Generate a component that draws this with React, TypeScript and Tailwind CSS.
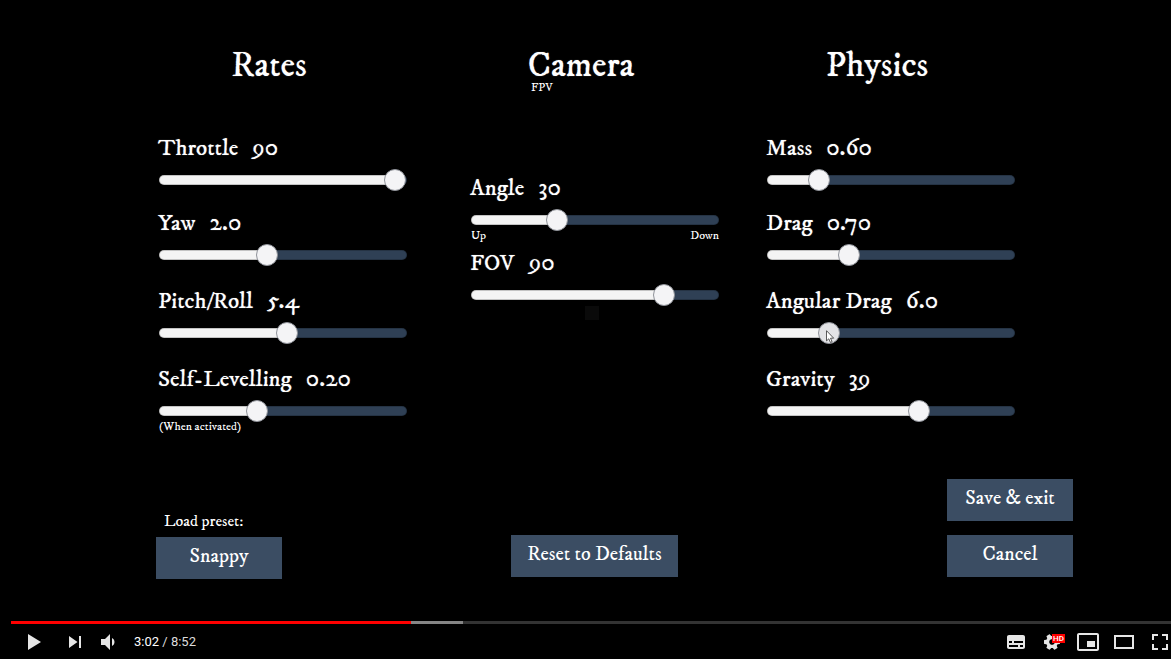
import React, { useState } from "react";

type Setting = {
  label: string;
  min: number;
  max: number;
  value: number;
  digits: number;
  hovered?: boolean;
  notes?: string[];
};

const rates: Setting[] = [
  { label: "Throttle", min: 0, max: 90, value: 90, digits: 0 },
  { label: "Yaw", min: 0.5, max: 4, value: 2, digits: 1 },
  { label: "Pitch/Roll", min: 0.5, max: 10, value: 5.4, digits: 1 },
  { label: "Self-Levelling", min: 0, max: 0.52, value: 0.2, digits: 2, notes: ["(When activated)"] },
];

const camera: Setting[] = [
  { label: "Angle", min: 0, max: 91, value: 30, digits: 0, notes: ["Up", "Down"] },
  { label: "FOV", min: 5, max: 110, value: 90, digits: 0 },
];

const physics: Setting[] = [
  { label: "Mass", min: 0.2, max: 2.45, value: 0.6, digits: 2 },
  { label: "Drag", min: 0.15, max: 1.9, value: 0.7, digits: 2 },
  { label: "Angular Drag", min: 0, max: 27, value: 6, digits: 1, hovered: true },
  { label: "Gravity", min: 0, max: 62.5, value: 39, digits: 0 },
];

function Slider({ setting }: { setting: Setting }) {
  const { label, min, max, digits, hovered, notes } = setting;
  const [value, setValue] = useState(setting.value);
  const ratio = (value - min) / (max - min);
  const edge = `calc(11px + (100% - 22px) * ${ratio})`;
  const id = label.toLowerCase().replace(/[^a-z]/g, "-");
  const thumb = hovered
    ? "[&::-webkit-slider-thumb]:bg-[#e3e3e6]"
    : "[&::-webkit-slider-thumb]:bg-[#f4f4f6]";

  return (
    <div>
      <div className="-ml-px flex items-baseline gap-3.5 text-[23px] leading-[30px] [text-shadow:0_0_1px_#ffffff80]">
        <label htmlFor={id}>{label}</label>
        <output htmlFor={id} className="text-[25px]">{value.toFixed(digits)}</output>
      </div>
      <div className="relative mt-2">
        <input
          id={id}
          type="range"
          min={min}
          max={max}
          step="any"
          value={value}
          onChange={(e) => setValue(Number(e.target.value))}
          style={{ "--fill": `linear-gradient(to right, #f4f4f4 ${edge}, #2f4055 ${edge})` } as React.CSSProperties}
          className={`block h-4 w-full appearance-none bg-transparent outline-none [&::-webkit-slider-runnable-track]:h-2.5 [&::-webkit-slider-runnable-track]:rounded-full [&::-webkit-slider-runnable-track]:border [&::-webkit-slider-runnable-track]:border-black/20 [&::-webkit-slider-runnable-track]:bg-(image:--fill) [&::-webkit-slider-runnable-track]:bg-origin-border [&::-webkit-slider-thumb]:-mt-[7px] [&::-webkit-slider-thumb]:size-[22px] [&::-webkit-slider-thumb]:appearance-none [&::-webkit-slider-thumb]:rounded-full [&::-webkit-slider-thumb]:border [&::-webkit-slider-thumb]:border-[#8f9299] ${thumb}`}
        />
        {hovered && (
          <svg className="pointer-events-none absolute top-[5px] left-[59px]" width="9" height="14" viewBox="0 0 9 14" aria-hidden="true">
            <path d="M.5.7v10.2l2.3-2.1 1.6 3.6 1.7-.7-1.6-3.5h3.2z" fill="#fff" stroke="#333" strokeWidth=".8" />
          </svg>
        )}
      </div>
      {notes && (
        <div className="flex justify-between text-xs leading-4">
          {notes.map((note) => (
            <span key={note}>{note}</span>
          ))}
        </div>
      )}
    </div>
  );
}

function Column({ title, note, settings, className, children }: {
  title: string;
  note?: string;
  settings: Setting[];
  className?: string;
  children?: React.ReactNode;
}) {
  return (
    <section className={className}>
      <header className="h-[87px]">
        <h2 className="pr-7 text-center text-[35px] leading-10 [text-shadow:0_0_1px_#ffffff80]">{title}</h2>
        {note && <p className="pl-[60px] text-xs leading-1">{note}</p>}
      </header>
      <div className={note ? "pt-10" : ""}>
        <div className={settings.length > 2 ? "grid grid-rows-[75px_78px_78px_auto]" : "grid grid-rows-[75px_auto]"}>
          {settings.map((s) => (
            <Slider key={s.label} setting={s} />
          ))}
        </div>
        {children}
      </div>
    </section>
  );
}

function MenuButton({ wide, children }: { wide?: boolean; children: React.ReactNode }) {
  return (
    <button
      type="button"
      className={`h-[42px] bg-[#3b4d63] pb-0.5 text-center text-xl leading-6 whitespace-nowrap ${wide ? "w-[167px]" : "w-[126px]"}`}
    >
      {children}
    </button>
  );
}

const icons = {
  play: "M12,26 18.5,22 18.5,14 12,10z M18.5,22 25,18 18.5,14z",
  next: "M12,24 20.5,18 12,12V24z M22,12v12h2V12h-2z",
  volume: "M8,21H12L17,26V10L12,15H8z M19,14V22C20.48,21.32 21.5,19.77 21.5,18C21.5,16.26 20.48,14.74 19,14z",
  subtitles:
    "M11,11C9.89,11 9,11.9 9,13V23C9,24.1 9.89,25 11,25H25C26.1,25 27,24.1 27,23V13C27,11.9 26.1,11 25,11z M11,17H14V19H11z M20,23H11V21H20z M25,23H22V21H25z M25,19H16V17H25z",
  settings:
    "m23.94,18.78c.03,-.25 .05,-.51 .05,-.78 0,-.27 -.02,-.52 -.05,-.78l1.68,-1.32c.15,-.12 .19,-.33 .09,-.51l-1.6,-2.76c-.09,-.17 -.31,-.24 -.48,-.17l-1.99,.8c-.41,-.32 -.86,-.58 -1.35,-.78l-.3,-2.12c-.02,-.19 -.19,-.33 -.39,-.33l-3.2,0c-.2,0 -.36,.14 -.39,.33l-.3,2.12c-.48,.2 -.93,.47 -1.35,.78l-1.99,-.8c-.18,-.07 -.39,0 -.48,.17l-1.6,2.76c-.1,.17 -.05,.39 .09,.51l1.68,1.32c-.03,.25 -.05,.52 -.05,.78 0,.26 .02,.52 .05,.78l-1.68,1.32c-.15,.12 -.19,.33 -.09,.51l1.6,2.76c.09,.17 .31,.24 .48,.17l1.99,-.8c.41,.32 .86,.58 1.35,.78l.3,2.12c.02,.19 .19,.33 .39,.33l3.2,0c.2,0 .36,-.14 .39,-.33l.3,-2.12c.48,-.2 .93,-.47 1.35,-.78l1.99,.8c.18,.07 .39,0 .48,-.17l1.6,-2.76c.09,-.17 .05,-.39 -.09,-.51l-1.68,-1.32z m-5.94,2.01c-1.54,0 -2.8,-1.25 -2.8,-2.8 0,-1.54 1.25,-2.8 2.8,-2.8 1.54,0 2.8,1.25 2.8,2.8 0,1.54 -1.25,2.8 -2.8,2.8z",
  miniplayer:
    "M25,17H17V23H25z M29,25V10.98C29,9.88 28.1,9 27,9H9C7.9,9 7,9.88 7,10.98V25C7,26.1 7.9,27 9,27H27C28.1,27 29,26.1 29,25z M27,25H9V11H27z",
  theater: "M28,11V25H8V11z M10,13H26V23H10z",
  fullscreen: "M10,16h2v-4h4v-2h-6z M20,10v2h4v4h2v-6z M24,24h-4v2h6v-6h-2z M12,20h-2v6h6v-2h-4z",
};

function PlayerButton({ icon, label, turned, children }: {
  icon: keyof typeof icons;
  label: string;
  turned?: boolean;
  children?: React.ReactNode;
}) {
  return (
    <button type="button" aria-label={label} className="relative size-9 shrink-0">
      <svg viewBox="0 0 36 36" className="size-9" fill="#e6e6e6" fillRule="evenodd" aria-hidden="true">
        <path d={icons[icon]} transform={turned ? "rotate(30 18 18)" : undefined} />
      </svg>
      {children}
    </button>
  );
}

export default function App() {
  return (
    <div className="flex min-h-screen flex-col overflow-hidden bg-black text-white">
      <main className="flex flex-1 flex-col justify-between pt-[46px] pb-[42px] font-['IM_Fell_DW_Pica','IM_Fell_English','Liberation_Serif',serif]">
        <div className="grid grid-cols-[312fr_296fr_248fr] pr-[156px] pl-[159px]">
          <Column title="Rates" settings={rates} className="pr-16" />
          <Column title="Camera" note="FPV" settings={camera} className="pr-12">
            <div className="mt-[3px] ml-[114px] size-3.5 bg-[#0a0a0a]" />
          </Column>
          <Column title="Physics" settings={physics} />
        </div>

        <div className="grid grid-cols-[355fr_436fr_126fr] items-end pr-[98px] pl-[156px]">
          <div className="flex flex-col items-start gap-1.5">
            <span className="pl-2 text-base leading-5">Load preset:</span>
            <MenuButton>Snappy</MenuButton>
          </div>
          <div className="flex pb-0.5">
            <MenuButton wide>Reset to Defaults</MenuButton>
          </div>
          <div className="flex flex-col gap-3.5 pb-0.5">
            <MenuButton>Save &amp; exit</MenuButton>
            <MenuButton>Cancel</MenuButton>
          </div>
        </div>
      </main>

      <footer>
        <div className="ml-[11px] flex h-[3px] bg-[#333]">
          <div className="w-[34.5%] bg-[#f00]" />
          <div className="w-[4.5%] bg-[#858585]" />
        </div>
        <div className="flex h-[35px] items-start overflow-hidden pl-4">
          <PlayerButton icon="play" label="Play" />
          <div className="ml-[5px] flex">
            <PlayerButton icon="next" label="Next" />
            <PlayerButton icon="volume" label="Mute" />
          </div>
          <div className="ml-[5px] font-['Roboto',sans-serif] text-[13px] leading-9 text-[#ddd]">
            <span className="text-white">3:02</span> / 8:52
          </div>
          <div className="-mr-[7px] ml-auto flex">
            <PlayerButton icon="subtitles" label="Subtitles" />
            <PlayerButton icon="settings" label="Settings" turned>
              <span className="absolute top-2.5 left-[18px] h-[9px] w-[13px] bg-[#f00] text-center font-['Roboto',sans-serif] text-[8px] leading-[9px] font-medium">
                HD
              </span>
            </PlayerButton>
            <PlayerButton icon="miniplayer" label="Miniplayer" />
            <PlayerButton icon="theater" label="Theater mode" />
            <PlayerButton icon="fullscreen" label="Full screen" />
          </div>
        </div>
      </footer>
    </div>
  );
}
